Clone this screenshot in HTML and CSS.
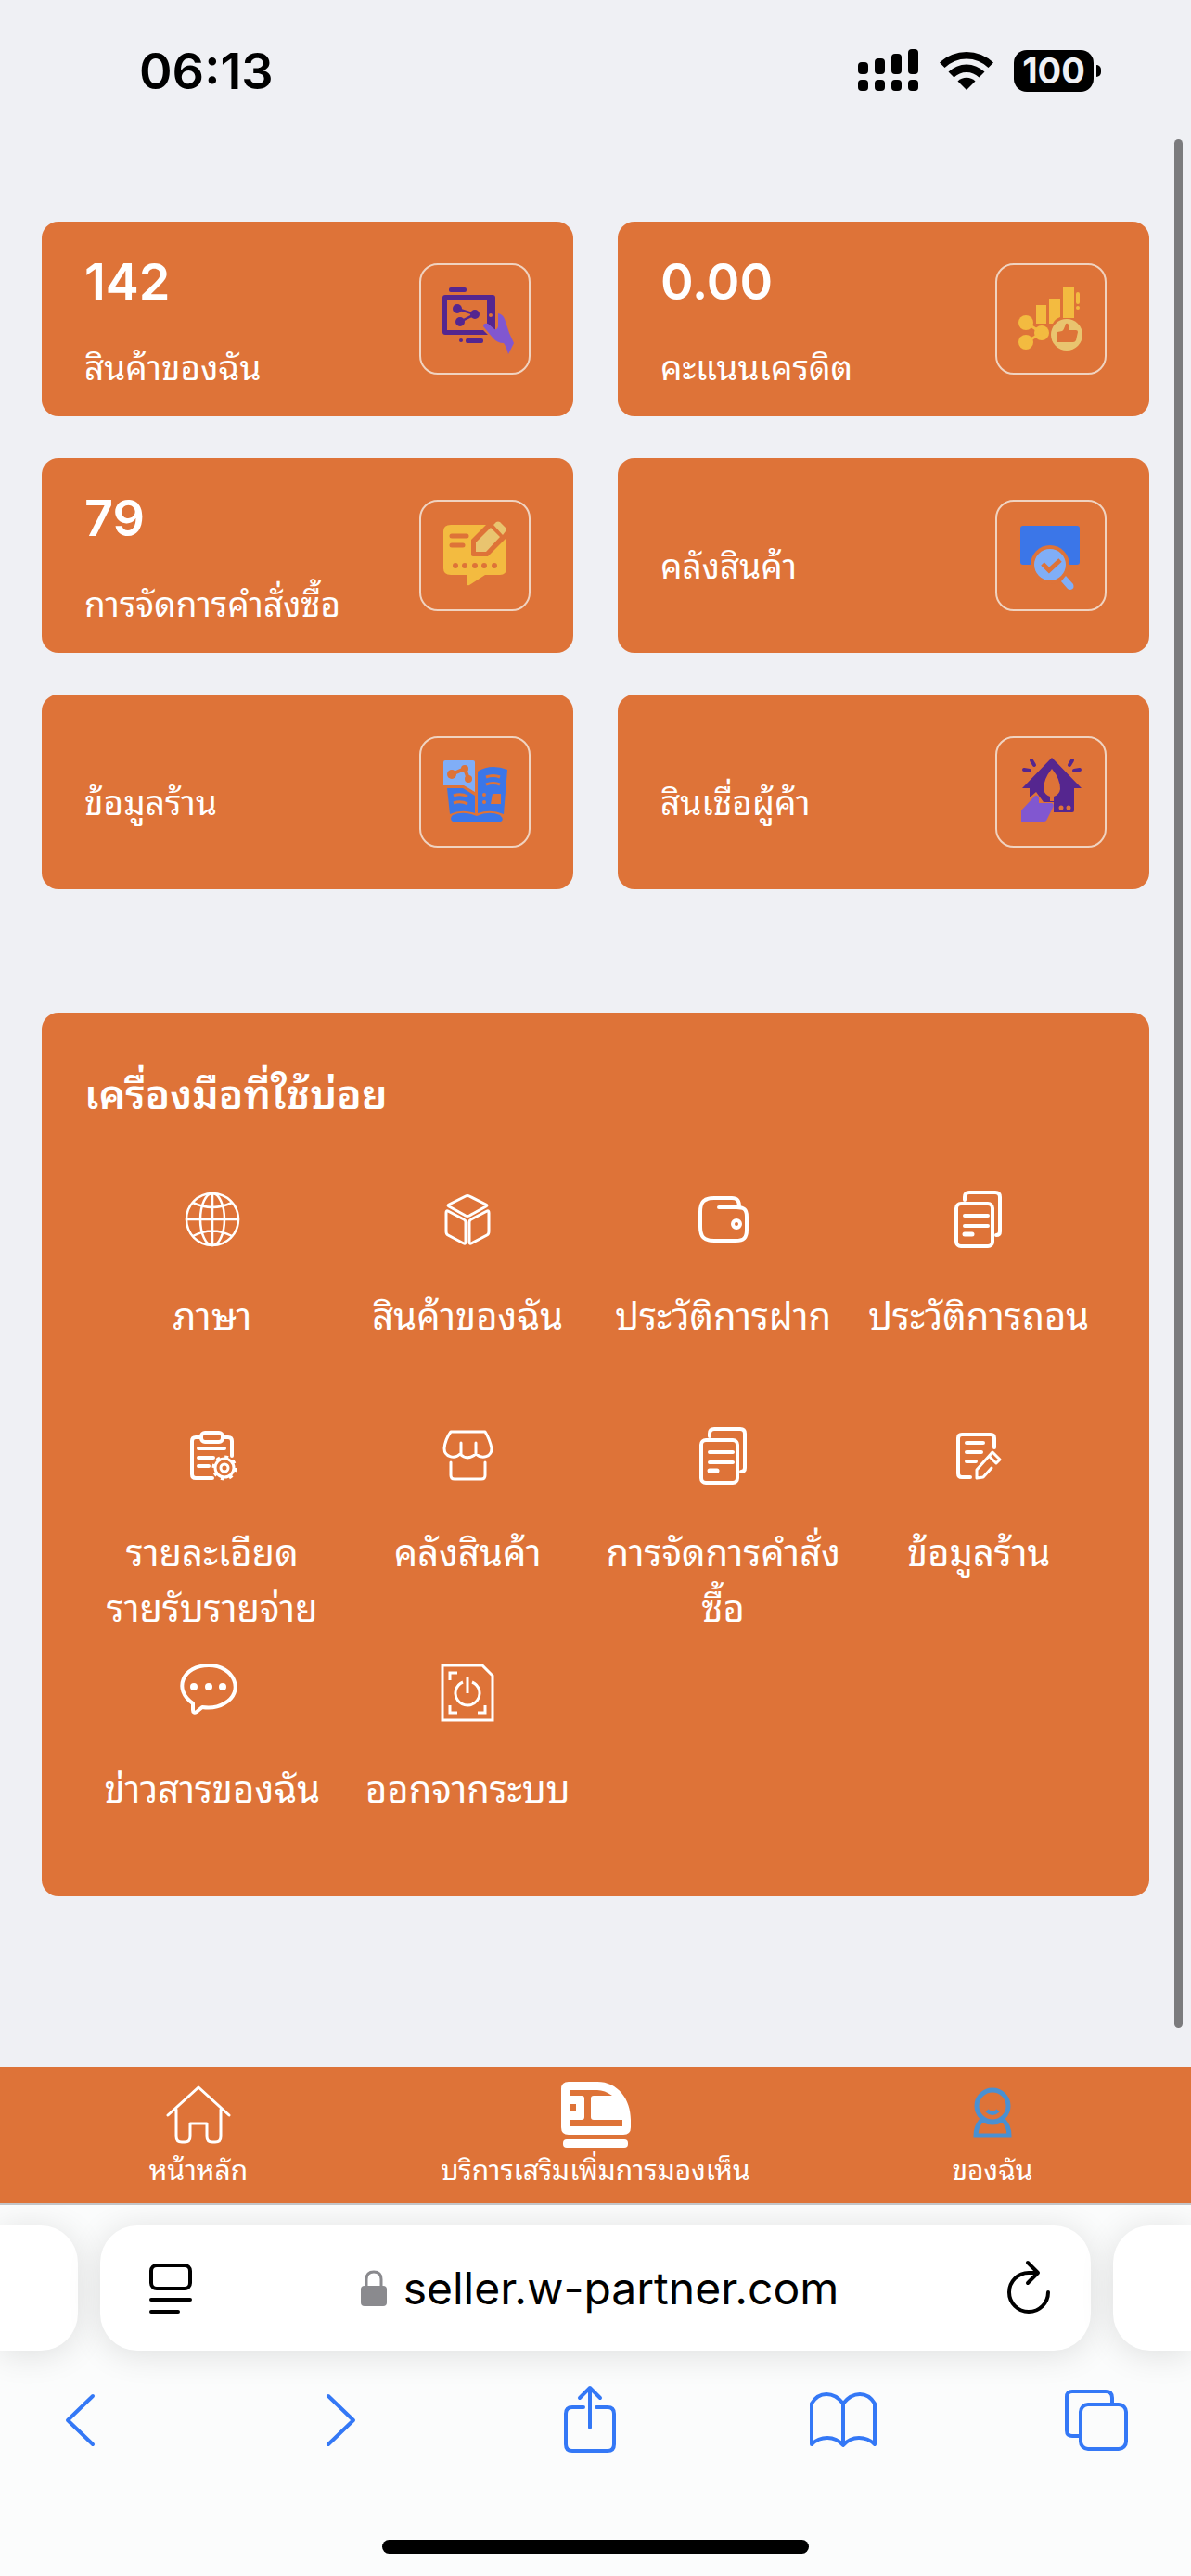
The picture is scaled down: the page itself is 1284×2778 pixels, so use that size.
FILE: index.html
```html
<!DOCTYPE html>
<html lang="th">
<head>
  <meta charset="UTF-8">
  <meta name="viewport" content="width=device-width, initial-scale=1.0">
  <title>seller.w-partner.com</title>
  <link rel="stylesheet" href="styles.css">
</head>
<body>
  <header class="status-bar">
    <time class="clock">06:13</time>
    <div class="status-icons">
      <svg width="66" height="46" viewBox="0 0 66 46">
        <rect x="0" y="14" width="11" height="13" rx="4"/>
        <rect x="18" y="10" width="11" height="17" rx="4"/>
        <rect x="36" y="5" width="11" height="22" rx="4"/>
        <rect x="54" y="0" width="11" height="27" rx="4"/>
        <rect x="0" y="33" width="11" height="12" rx="4"/>
        <rect x="18" y="33" width="11" height="12" rx="4"/>
        <rect x="36" y="33" width="11" height="12" rx="4"/>
        <rect x="54" y="33" width="11" height="12" rx="4"/>
      </svg>
      <svg width="58" height="42" viewBox="0 0 58 42">
        <path d="M0 12.500a42 42 0 0 1 58 0l-5.500 5.500a34 34 0 0 0-47 0z"/>
        <path d="M9.500 22.500a28 28 0 0 1 39 0l-6 6a19.500 19.500 0 0 0-27 0z"/>
        <path d="M19.500 32.500a14 14 0 0 1 19 0L29 42z"/>
      </svg>
      <div class="battery"><span class="battery-level">100</span></div>
    </div>
  </header>

  <main class="content">
    <section class="cards">
      <a class="card" href="#">
        <div class="card-text">
          <div class="card-number">142</div>
          <div class="card-label">สินค้าของฉัน</div>
        </div>
        <div class="card-icon">
          <svg viewBox="2 2 116 116">
            <g fill="#55268f">
              <rect x="32" y="26" width="19" height="5" rx="2"/>
              <rect x="50" y="81" width="19" height="5" rx="2"/>
              <circle cx="45" cy="83" r="2"/>
              <path fill-rule="evenodd" d="M28 34h51q3 0 3 3v35L73 65V39H30v33h39l5 5H28q-3 0-3-3V37q0-3 3-3z"/>
              <circle cx="41" cy="49" r="5"/>
              <circle cx="60" cy="55" r="5"/>
              <circle cx="44" cy="63" r="5"/>
            </g>
            <path d="M41 49l19 6-16 8" stroke="#55268f" stroke-width="2.500" fill="none"/>
            <circle cx="77" cy="56" r="2" fill="#de7338"/>
            <path fill="#8157d0" d="M85 54q5 1 7 6l5 15 5 11-6 12q-2-8-5-12-7 0-12-6l-10-12q0-4 5-3l7 6q3 1 4-3z"/>
          </svg>
        </div>
      </a>
      <a class="card" href="#">
        <div class="card-text">
          <div class="card-number">0.00</div>
          <div class="card-label">คะแนนเครดิต</div>
        </div>
        <div class="card-icon">
          <svg viewBox="2 2 116 116">
            <g fill="#f3bb40">
              <rect x="44" y="45" width="11" height="20"/>
              <path d="M58 38h12v20q-6 2-8 7h-4z"/>
              <rect x="73" y="26" width="12" height="33"/>
              <rect x="87" y="31" width="4" height="13" rx="2"/>
              <circle cx="89" cy="48" r="2"/>
              <circle cx="33" cy="64" r="8"/>
              <circle cx="33" cy="85" r="8"/>
              <circle cx="50" cy="75" r="8"/>
            </g>
            <path d="M33 64l17 11-17 10" stroke="#f3bb40" stroke-width="3" fill="none"/>
            <circle cx="77" cy="77" r="17" fill="#e9c46f"/>
            <path fill="#de7338" d="M67 74l5-1q2-1 4-8 3-1 3 2v5h8q2 0 2 2l-2 9q-1 2-3 2H67z"/>
          </svg>
        </div>
      </a>
      <a class="card" href="#">
        <div class="card-text">
          <div class="card-number">79</div>
          <div class="card-label">การจัดการคำสั่งซื้อ</div>
        </div>
        <div class="card-icon">
          <svg viewBox="2 2 116 116">
            <path fill="#f3bb40" d="M34 27h38L56 43v16q0 2 2 2h16l20-20v33q0 7-7 7H71L54 92q-3 1-3-2v-9H34q-8 0-8-7V34q0-7 8-7z"/>
            <path d="M35 39h16M35 49h12" stroke="#de7338" stroke-width="5" stroke-linecap="round"/>
            <g fill="#de7338">
              <circle cx="39" cy="71" r="3"/>
              <circle cx="49" cy="71" r="3"/>
              <circle cx="60" cy="71" r="3"/>
              <circle cx="70" cy="71" r="3"/>
              <circle cx="81" cy="71" r="3"/>
            </g>
            <path fill="#e9c46f" d="M77 30l10 10-15 16H61V46zM80 27l3-3q2-1 4 0l6 6q1 2 0 4l-3 4z"/>
          </svg>
        </div>
      </a>
      <a class="card" href="#">
        <div class="card-label card-label-single">คลังสินค้า</div>
        <div class="card-icon">
          <svg viewBox="2 2 116 116">
            <rect x="27" y="28" width="64" height="42" rx="3" fill="#3b76e8"/>
            <circle cx="59" cy="70" r="21" fill="#de7338"/>
            <circle cx="59" cy="70" r="17" fill="#80aef7"/>
            <path d="M51 69l7 7 12-11" stroke="#de7338" stroke-width="5" fill="none"/>
            <path fill="#80aef7" d="M76 82l8 9q2 5-3 6-2 0-3-1l-7-8z"/>
          </svg>
        </div>
      </a>
      <a class="card" href="#">
        <div class="card-label card-label-single">ข้อมูลร้าน</div>
        <div class="card-icon">
          <svg viewBox="2 2 116 116">
            <path fill="#80aef7" d="M28 26h30q2 0 2 2v32l-12-7H26V28q0-2 2-2z"/>
            <path d="M35 41l14-6 4 11" stroke="#de7338" stroke-width="4" fill="none"/>
            <circle cx="35" cy="41" r="5" fill="#de7338"/>
            <circle cx="49" cy="35" r="4" fill="#de7338"/>
            <circle cx="53" cy="46" r="4" fill="#de7338"/>
            <g fill="#3b76e8">
              <path d="M30 56h17l13 8v19q-14-5-27 1z"/>
              <path d="M63 38q14-9 32-2l-4 48q-14-6-28-1z"/>
              <path d="M36 92q-4-3 0-7 12-5 26 1 13-6 25-1 5 5 1 7z"/>
            </g>
            <path d="M37 64q8-3 15 1M37 72q8-3 15 1M72 44q8-3 15 0M72 52q8-3 15 0" stroke="#de7338" stroke-width="3" fill="none"/>
            <path fill="#de7338" d="M79 62h9v11H77z"/>
            <circle cx="70" cy="63" r="2" fill="#de7338"/>
            <circle cx="70" cy="71" r="2" fill="#de7338"/>
          </svg>
        </div>
      </a>
      <a class="card" href="#">
        <div class="card-label card-label-single">สินเชื่อผู้ค้า</div>
        <div class="card-icon">
          <svg viewBox="2 2 116 116">
            <path fill="#55268f" d="M61 23l32 33h-8v24q0 2-2 2H63V71H52L44 60l-7 6V56h-8z"/>
            <path d="M39 26l3 5M31 36l6 1M83 26l-3 5M91 36l-6 1" stroke="#55268f" stroke-width="4" stroke-linecap="round"/>
            <path fill="#de7338" d="M61 35q9 11 9 22-1 6-7 8v5h-4v-5q-6-2-7-8 0-11 9-22z"/>
            <circle cx="71" cy="77" r="2.500" fill="#de7338"/>
            <circle cx="79" cy="77" r="2.500" fill="#de7338"/>
            <path fill="#8157d0" d="M28 80l14-15q3-3 5 1v6h14q3 2 1 5l-7 14q-1 1-3 1H28z"/>
          </svg>
        </div>
      </a>
    </section>

    <section class="tools">
      <h2 class="tools-title">เครื่องมือที่ใช้บ่อย</h2>
      <div class="tools-grid">
        <a class="tool" href="#">
          <svg class="tool-icon" viewBox="0 0 72 72" stroke-width="2.500">
            <circle cx="36" cy="36" r="28"/>
            <ellipse cx="36" cy="36" rx="13" ry="28"/>
            <path d="M36 8v56M8 36h56M15 18q21 10 42 0M15 54q21-11 42 0"/>
          </svg>
          <span>ภาษา</span>
        </a>
        <a class="tool" href="#">
          <svg class="tool-icon" viewBox="0 0 72 72" stroke-width="3">
            <path d="M34 11q2-1 4 0l18 9q2 1 0 2l-18 10q-2 1-4 0l-18-10q-2-1 0-2z"/>
            <path d="M15 27l17 9q2 1 2 3v21q0 3-2 2l-17-9q-2-1-2-4V29q0-3 2-2z"/>
            <path d="M57 27l-17 9q-2 1-2 3v21q0 3 2 2l17-9q2-1 2-4V29q0-3-2-2z"/>
          </svg>
          <span>สินค้าของฉัน</span>
        </a>
        <a class="tool" href="#">
          <svg class="tool-icon" viewBox="0 0 72 72" stroke-width="4">
            <path d="M53 22c0-7-3-9-8-9H26c-11 0-15 4-15 15v16c0 11 4 15 15 15h23c9 0 12-3 12-12V33c0-8-3-10-11-10H31"/>
            <circle cx="50" cy="41" r="4"/>
          </svg>
          <span>ประวัติการฝาก</span>
        </a>
        <a class="tool" href="#">
          <svg class="tool-icon" viewBox="0 0 72 72" stroke-width="4">
            <rect x="12" y="19" width="39" height="46" rx="5"/>
            <path d="M21 15v-3q0-5 5-5h28q5 0 5 5v37q0 4-4 4M21 32h25M21 43h25"/>
            <path d="M21 52h8" stroke-width="5"/>
          </svg>
          <span>ประวัติการถอน</span>
        </a>
        <a class="tool" href="#">
          <svg class="tool-icon" viewBox="0 0 72 72" stroke-width="4">
            <rect x="24" y="11" width="23" height="10" rx="4"/>
            <path d="M24 16h-6q-4 0-4 4v36q0 4 4 4h18M47 16h6q4 0 4 4v16M21 28h28M21 38h16M21 47h11"/>
            <circle cx="49" cy="49" r="10" stroke-width="3"/>
            <circle cx="49" cy="49" r="4" stroke-width="3"/>
            <circle cx="49" cy="49" r="12" stroke-width="3" stroke-dasharray="4 5.400" stroke-linecap="butt"/>
          </svg>
          <span>รายละเอียด<br>รายรับรายจ่าย</span>
        </a>
        <a class="tool" href="#">
          <svg class="tool-icon" viewBox="0 0 72 72" stroke-width="3">
            <path d="M18 10h37q5 8 7 18c0 9-10 12-17 6-6 5-12 5-17 0-6 6-17 3-17-6q1-10 7-18zM29 22v12M45 22v12"/>
            <path d="M18 43v14q0 4 4 4h29q4 0 4-4V43"/>
          </svg>
          <span>คลังสินค้า</span>
        </a>
        <a class="tool" href="#">
          <svg class="tool-icon" viewBox="0 0 72 72" stroke-width="4">
            <rect x="12" y="19" width="39" height="46" rx="5"/>
            <path d="M21 15v-3q0-5 5-5h28q5 0 5 5v37q0 4-4 4M21 32h25M21 43h25"/>
            <path d="M21 52h8" stroke-width="5"/>
          </svg>
          <span>การจัดการคำสั่ง<br>ซื้อ</span>
        </a>
        <a class="tool" href="#">
          <svg class="tool-icon" viewBox="0 0 72 72" stroke-width="4">
            <path d="M27 59h-9q-4 0-4-4V17q0-4 4-4h31q4 0 4 4v10M23 22h18M23 32h16M23 42h10"/>
            <path d="M50 49l-9 10-7 1v-9l17-19 8 8-4 4-7-7" stroke-width="3"/>
          </svg>
          <span>ข้อมูลร้าน</span>
        </a>
        <a class="tool" href="#">
          <svg class="tool-icon" viewBox="0 0 72 72" stroke-width="4">
            <path d="M15 48C-7 33 4 7 32 7s39 29 17 41q-10 6-24 4l-6 5q-4 2-4-2z"/>
            <g fill="#fff" stroke="none">
              <circle cx="16" cy="30" r="4"/>
              <circle cx="32" cy="30" r="4"/>
              <circle cx="47" cy="30" r="4"/>
            </g>
          </svg>
          <span>ข่าวสารของฉัน</span>
        </a>
        <a class="tool" href="#">
          <svg class="tool-icon sharp" viewBox="0 0 72 72" stroke-width="3">
            <path d="M9 7h43l11 11v48H9zM17 23v-8h8M17 50v8h8M55 50v8h-8M36 20v17M31 25a13 13 0 1 0 10 0"/>
          </svg>
          <span>ออกจากระบบ</span>
        </a>
      </div>
    </section>
    <div class="scroll-thumb"></div>
  </main>

  <nav class="tab-bar">
    <a class="tab" href="#">
      <svg width="76" height="72" viewBox="0 0 76 72" fill="none" stroke="#fff" stroke-width="3" stroke-linecap="round" stroke-linejoin="round">
        <path d="M5 37L38 7l33 30M14 31v29q0 6 6 6h3q6 0 6-6V46h18v14q0 6 6 6h3q6 0 6-6V31"/>
      </svg>
      <span>หน้าหลัก</span>
    </a>
    <a class="tab" href="#">
      <svg width="76" height="72" viewBox="0 0 76 72" fill="#fff">
        <path fill-rule="evenodd" d="M9 1h31c22 0 36 19 36 41v8q0 8-8 8H9q-8 0-8-8V9q0-8 8-8zM10 10v6h13q3 0 3 3v20q0 3-3 3H10v7h57v-7H36q-3 0-3-3V19q0-3 3-3h20q-8-6-16-6zM10 25v8h7v-8z"/>
        <rect x="3" y="63" width="70" height="9" rx="4"/>
      </svg>
      <span>บริการเสริมเพิ่มการมองเห็น</span>
    </a>
    <a class="tab" href="#">
      <svg width="76" height="72" viewBox="0 0 76 72" fill="none" stroke="#4a90d2" stroke-width="5">
        <circle cx="38" cy="27" r="17"/>
        <path d="M32 32q6 6 12 0" stroke-width="4"/>
        <path d="M27 42q-7 6-7 17h36q0-11-7-17-11 6-22 0z"/>
      </svg>
      <span>ของฉัน</span>
    </a>
  </nav>

  <footer class="browser">
    <div class="address-row">
      <div class="address-stub stub-left"></div>
      <div class="address-bar">
        <button class="icon-button" aria-label="Page menu">
          <svg width="46" height="54" viewBox="0 0 46 54" fill="none" stroke="#000" stroke-width="4" stroke-linecap="round">
            <rect x="2" y="2" width="42" height="25" rx="6"/>
            <path d="M2 39h42M2 52h29"/>
          </svg>
        </button>
        <button class="address">
          <svg width="28" height="40" viewBox="0 0 28 40">
            <rect x="0" y="17" width="28" height="22" rx="4" fill="#8a8a8e"/>
            <path d="M6 18V10q0-8 8-8t8 8v8" fill="none" stroke="#8a8a8e" stroke-width="3"/>
          </svg>
          <span>seller.w-partner.com</span>
        </button>
        <button class="icon-button" aria-label="Reload">
          <svg width="46" height="54" viewBox="0 0 46 54" fill="none" stroke="#000" stroke-width="4" stroke-linecap="round" stroke-linejoin="round">
            <path d="M44 31a21 21 0 1 1-21-21h9M22 -1l11 11-11 11"/>
          </svg>
        </button>
      </div>
      <div class="address-stub stub-right"></div>
    </div>
    <div class="toolbar">
      <button class="icon-button" aria-label="Back">
        <svg width="72" height="76" viewBox="0 0 72 76"><path d="M50 13L23 39l27 26"/></svg>
      </button>
      <button class="icon-button" aria-label="Forward">
        <svg width="72" height="76" viewBox="0 0 72 76"><path d="M30 13l27 26-27 26"/></svg>
      </button>
      <button class="icon-button" aria-label="Share">
        <svg width="72" height="76" viewBox="0 0 72 76"><path d="M31 25H19q-7 0-7 7v33q0 7 7 7h38q7 0 7-7V32q0-7-7-7H45M38 47V4M27 15L38 4l11 11"/></svg>
      </button>
      <button class="icon-button" aria-label="Bookmarks">
        <svg width="72" height="76" viewBox="0 0 72 76"><path d="M37 65V21Q29 11 19 11T3 21v44q7-7 17-7t17 8q7-8 17-8t17 7V21Q65 11 55 11T37 21"/></svg>
      </button>
      <button class="icon-button" aria-label="Tabs">
        <svg width="72" height="76" viewBox="0 0 72 76"><rect x="19" y="22" width="49" height="48" rx="8"/><path d="M19 56h-9q-6 0-6-6V14q0-6 6-6h36q7 0 7 7v7"/></svg>
      </button>
    </div>
    <div class="home-indicator"></div>
  </footer>
</body>
</html>
```

FILE: styles.css
```css
* {
  box-sizing: border-box;
}

body {
  margin: 0;
  min-height: 100vh;
  display: flex;
  flex-direction: column;
  position: relative;
  background-color: #eff0f4;
  color: #000;
  font-family: Inter, "Noto Sans Thai Looped", Loma, "Noto Sans Thai", "Noto Sans", sans-serif;
}

a {
  color: inherit;
  text-decoration: none;
}

svg {
  display: block;
  overflow: visible;
}

/* status bar */
.status-bar {
  display: flex;
  justify-content: space-between;
  align-items: center;
  height: 152px;
  padding: 0 97px 0 150px;
}

.clock {
  font-size: 54px;
  font-weight: 600;
}

.status-icons {
  display: flex;
  align-items: center;
  gap: 22px;
}

.battery {
  position: relative;
  width: 86px;
  height: 45px;
  margin-right: 8px;
  border-radius: 14px;
  background-color: #000;
  color: #eff0f4;
  text-align: center;
}

.battery::after {
  content: "";
  position: absolute;
  right: -8px;
  top: 16px;
  width: 5px;
  height: 13px;
  border-radius: 0 5px 5px 0;
  background-color: #000;
}

.battery-level {
  font-size: 38px;
  font-weight: 700;
  line-height: 45px;
}

/* content */
.content {
  flex: 1;
  padding: 87px 45px 0;
}

.cards {
  display: grid;
  grid-template-columns: 1fr 1fr;
  gap: 45px 48px;
}

.card {
  display: flex;
  justify-content: space-between;
  align-items: center;
  height: 210px;
  padding: 0 46px;
  border-radius: 18px;
  background-color: #de7338;
  color: #fff;
}

.card-text {
  padding-top: 12px;
}

.card-number {
  font-size: 54px;
  font-weight: 600;
  line-height: 62px;
}

.card-label {
  margin-top: 32px;
  font-size: 37px;
  line-height: 60px;
}

.card-label-single {
  margin-top: 24px;
}

.card-icon {
  width: 120px;
  height: 120px;
  border: 2px solid #f0d3c0;
  border-radius: 20px;
}

.tools {
  margin-top: 133px;
  padding: 50px 46px 0;
  height: 953px;
  border-radius: 18px;
  background-color: #de7338;
  color: #fff;
}

.tools-title {
  margin: 0;
  font-size: 44px;
  font-weight: 600;
  line-height: 76px;
}

.tools-grid {
  display: grid;
  grid-template-columns: repeat(4, 1fr);
  grid-auto-rows: 255px;
  padding-top: 61px;
}

.tool {
  display: flex;
  flex-direction: column;
  align-items: center;
  gap: 39px;
  font-size: 40px;
  line-height: 60px;
  text-align: center;
  white-space: nowrap;
}

.tool-icon {
  width: 72px;
  height: 72px;
  fill: none;
  stroke: #fff;
  stroke-linecap: round;
  stroke-linejoin: round;
}

.tool-icon.sharp {
  stroke-linecap: butt;
  stroke-linejoin: miter;
}

.scroll-thumb {
  position: absolute;
  top: 150px;
  right: 9px;
  width: 9px;
  height: 2037px;
  border-radius: 5px;
  background-color: #7b7b7d;
}

/* bottom tabs */
.tab-bar {
  display: flex;
  height: 147px;
  padding-top: 15px;
  background-color: #de7338;
  color: #fff;
}

.tab {
  flex: 1;
  display: flex;
  flex-direction: column;
  align-items: center;
  font-size: 30px;
  line-height: 48px;
  white-space: nowrap;
}

/* browser controls */
.browser {
  height: 402px;
  padding-top: 22px;
  border-top: 2px solid #c3c5c8;
  background-color: #fbfcfc;
  overflow: hidden;
}

.address-row {
  display: flex;
  gap: 24px;
  height: 135px;
}

.address-bar,
.address-stub {
  background-color: #fff;
  box-shadow: 0 4px 36px rgba(0, 0, 0, 0.12);
}

.address-bar {
  flex: 1;
  display: flex;
  justify-content: space-between;
  align-items: center;
  padding: 0 44px 0 53px;
  border-radius: 40px;
}

.address-stub {
  width: 84px;
}

.stub-left {
  border-radius: 0 40px 40px 0;
}

.stub-right {
  border-radius: 40px 0 0 40px;
}

button {
  padding: 0;
  border: none;
  background: none;
  color: inherit;
  font-family: inherit;
  cursor: pointer;
}

.address {
  display: flex;
  align-items: center;
  gap: 18px;
  font-size: 48px;
}

.toolbar {
  display: flex;
  justify-content: space-between;
  padding: 36px 66px 0 50px;
}

.toolbar svg {
  fill: none;
  stroke: #3478f6;
  stroke-width: 4;
  stroke-linecap: round;
  stroke-linejoin: round;
}

.home-indicator {
  width: 460px;
  height: 15px;
  margin: 92px auto 0;
  border-radius: 8px;
  background-color: #000;
}
```
